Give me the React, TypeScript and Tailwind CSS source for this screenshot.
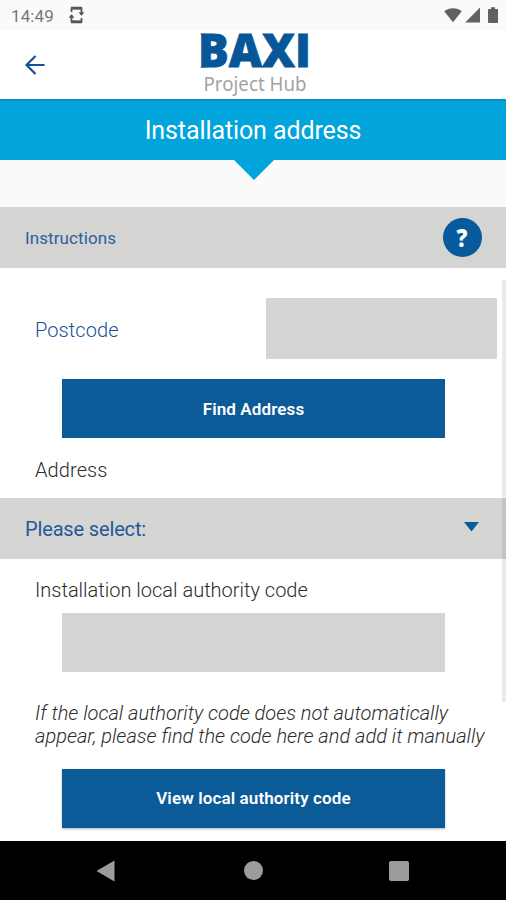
import React, { useState } from "react";

const StatusBar = () => (
    <div className="flex h-[30px] shrink-0 items-center bg-[#fafafa] pl-[11px] pr-[8px]">
        <span className="pt-px text-[17px] leading-[30px] tracking-[0.1px] text-[#777]">14:49</span>
        <svg className="ml-[15px]" width="15" height="18" viewBox="0 0 15 18" fill="none" stroke="#555" strokeWidth="1.8">
            <path d="M2.500 6V2.500h10V9M12.500 12v3.500h-10V9" />
            <path d="M2 2h11M2 16h11" strokeWidth="2.6" />
            <path d="M9.500 6.300h6l-3 3.400zM-.5 11.700h6l-3-3.400z" fill="#555" stroke="none" />
        </svg>
        <div className="ml-auto flex items-center">
            <svg width="18" height="16" viewBox="0 0 18 16" fill="#616161">
                <path d="M9 15.200.2 4.200C5 .2 13 .2 17.800 4.200z" />
            </svg>
            <svg className="ml-[3px]" width="15" height="16" viewBox="0 0 15 16" fill="#616161">
                <path d="M15 .5v15H.2z" />
            </svg>
            <svg className="ml-[8px]" width="10" height="16" viewBox="0 0 10 16" fill="#616161">
                <path d="M3 .3h4v1.600h2q1 0 1 1V15q0 1-1 1H1q-1 0-1-1V2.900q0-1 1-1h2z" />
            </svg>
        </div>
    </div>
);

const Logo = () => (
    <svg className="overflow-visible" width="112" height="69" viewBox="0 0 112 69">
        <text x="1" y="37" fill="#075697" stroke="#075697" strokeWidth="0.8" fontFamily="'Open Sans', 'Noto Sans', sans-serif" fontWeight="800" fontSize="46" textLength="113" lengthAdjust="spacingAndGlyphs">
            BAXI
        </text>
        <path d="M3 3.800H9v5zM3 37.500H9v-4z" fill="#075697" />
        <text x="6.500" y="60.500" fill="#a3a3a0" fontFamily="'Noto Sans', 'Open Sans', sans-serif" fontWeight="400" fontSize="20" textLength="103" lengthAdjust="spacingAndGlyphs">
            Project Hub
        </text>
    </svg>
);

const Header = () => (
    <header className="grid h-[69px] shrink-0 grid-cols-3 bg-white">
        <button className="flex items-center pl-[25px]" aria-label="Back">
            <svg width="20" height="20" viewBox="0 0 20 20" fill="none" stroke="#164f97" strokeWidth="2.2">
                <path d="M19.500 10H2M10.500 1 1.500 10l9 9" />
            </svg>
        </button>
        <div className="flex justify-center">
            <Logo />
        </div>
    </header>
);

const buttonClass =
    "ml-[62px] mr-[61px] flex h-[59px] shrink-0 items-center justify-center bg-[#0c5b99] text-[17px] font-semibold tracking-[0.12px] text-white";

export default function App() {
    const [postcode, setPostcode] = useState("");
    const [code, setCode] = useState("");

    return (
        <div className="flex h-[900px] w-[506px] flex-col overflow-hidden bg-white font-['Roboto',sans-serif]">
            <StatusBar />
            <Header />

            <div className="flex h-[61px] shrink-0 items-center justify-center border-t-2 border-[#078fc9] bg-[#02a4dc]">
                <h1 className="pt-px text-[25px] leading-[30px] tracking-[-0.1px] text-white">Installation address</h1>
            </div>
            <div className="flex h-[47px] shrink-0 justify-center bg-[#fafafa]">
                <svg className="ml-px" width="40" height="20" viewBox="0 0 40 20">
                    <path d="M0 0h40L20 20z" fill="#02a4dc" />
                </svg>
            </div>

            <div className="flex h-[61px] shrink-0 items-center justify-between bg-[#d4d4d2] pl-[25px] pr-[24px]">
                <span className="pt-[3px] text-[17px] tracking-[0.1px] text-[#2c609e]">Instructions</span>
                <button className="flex size-[39px] items-center justify-center rounded-full bg-[#075a9b] font-['Open_Sans',sans-serif] text-[24px] font-extrabold text-white">
                    <span className="scale-x-90">?</span>
                </button>
            </div>

            <main className="relative flex h-[573px] shrink-0 flex-col">
                <div className="mt-[30px] flex h-[61px] items-center justify-between pl-[35px] pr-[9px]">
                    <label htmlFor="postcode" className="pt-[2px] text-[20px] font-light tracking-[0.1px] text-[#184f94]">Postcode</label>
                    <input
                        id="postcode"
                        className="h-[61px] w-[231px] bg-[#d5d5d3] px-3 outline-none"
                        value={postcode}
                        onChange={(e) => setPostcode(e.target.value)}
                    />
                </div>
                <button className={`${buttonClass} mt-[20px] pt-[2px]`}>Find Address</button>
                <p className="mt-[17px] pl-[35px] text-[20px] font-light leading-[30px] tracking-[0.1px] text-[#2c2c2c]">Address</p>

                <button className="mt-[13px] flex h-[61px] shrink-0 items-center justify-between bg-[#d5d5d3] pl-[25px] pr-[27px]">
                    <span className="text-[20px] tracking-[-0.15px] text-[#24599b]">Please select:</span>
                    <svg className="-mt-1" width="15" height="10" viewBox="0 0 15 10">
                        <path d="M0 0h15L7.500 9.500z" fill="#0c5b99" />
                    </svg>
                </button>

                <label htmlFor="code" className="mt-[16px] pl-[35px] text-[20px] font-light leading-[30px] text-[#2c2c2c]">
                    Installation local authority code
                </label>
                <input
                    id="code"
                    className="ml-[62px] mr-[61px] mt-[8px] h-[59px] shrink-0 bg-[#d5d5d3] px-3 outline-none"
                    value={code}
                    onChange={(e) => setCode(e.target.value)}
                />
                <p className="mt-[30px] whitespace-nowrap pl-[35px] text-[20px] font-light italic leading-[23px] text-[#2c2c2c]">
                    If the local authority code does not automatically
                    <br />
                    appear, please find the code here and add it manually
                </p>
                <button className={`${buttonClass} mt-[21px] shadow-[0_1px_2px_rgba(0,0,0,0.3)]`}>View local authority code</button>

                {/* scroll indicator */}
                <div className="absolute right-0 top-[12px] h-[422px] w-[4px] bg-black/8" />
            </main>

            <nav className="flex h-[59px] shrink-0 items-center bg-black pl-[96px]">
                <svg width="19" height="22" viewBox="0 0 19 22">
                    <path d="M18.500.500v21L.500 11z" fill="#9c9c9c" />
                </svg>
                <div className="ml-[129px] size-[19px] rounded-full bg-[#9c9c9c]" />
                <div className="ml-[126px] size-[20px] rounded-[2px] bg-[#9c9c9c]" />
            </nav>
        </div>
    );
}
